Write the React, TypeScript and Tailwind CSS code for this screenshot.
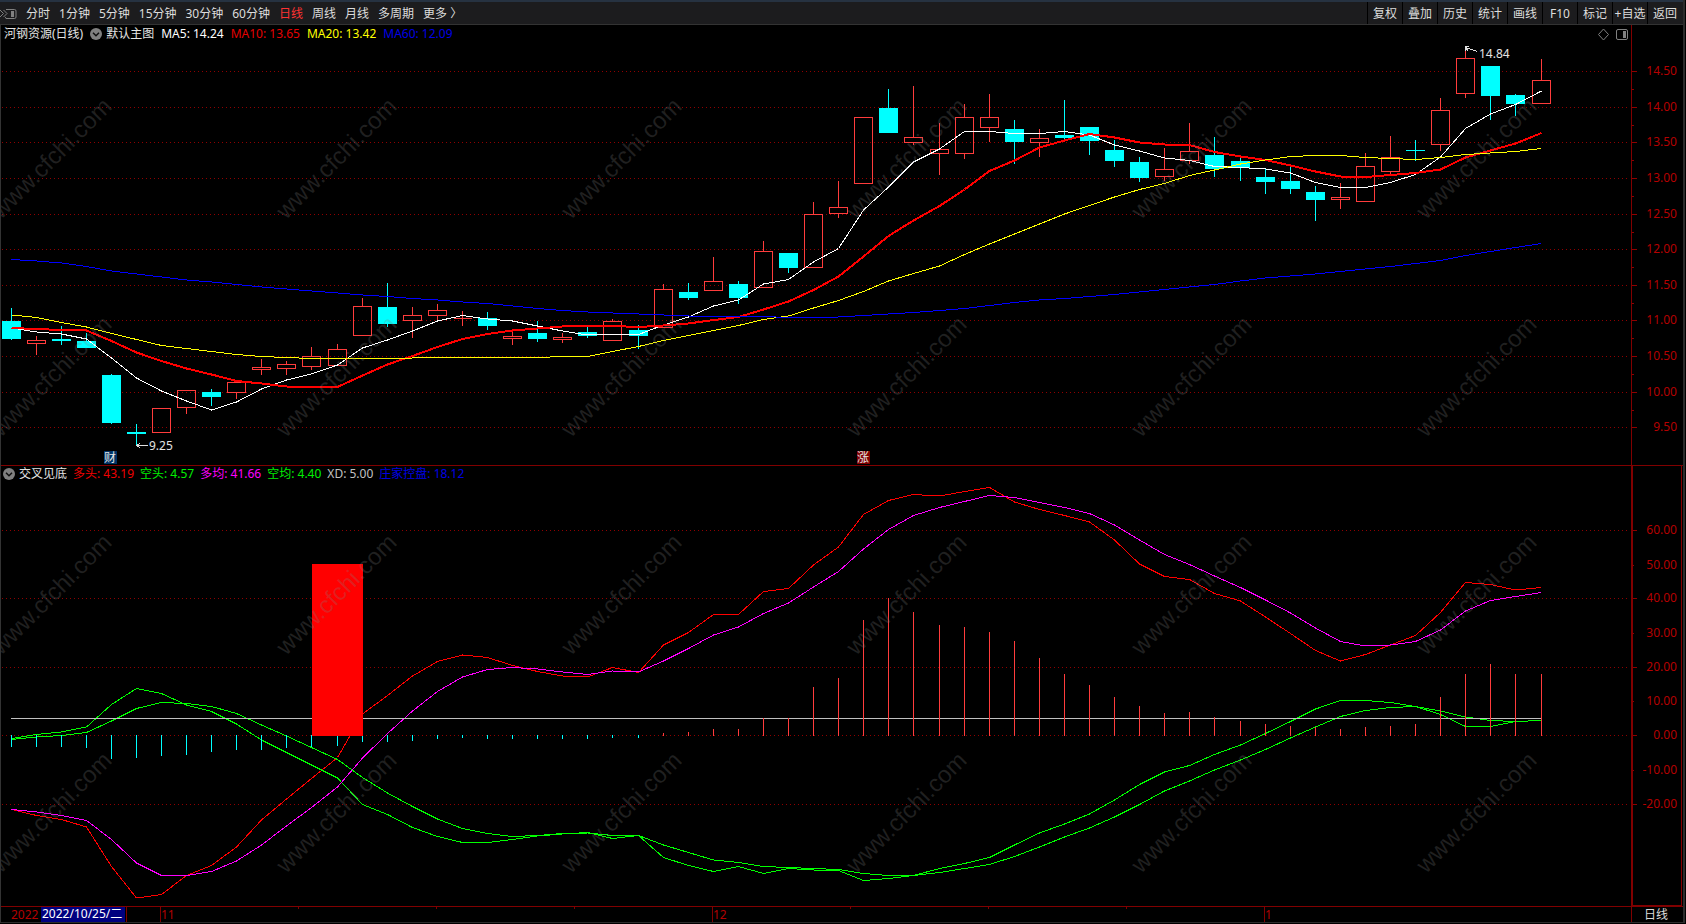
type Candle = [high: number, top: number, bottom: number, low: number, rising: 0 | 1];

const FIRST_X = 11;
const LAST_X = 1541;
const COUNT = 62;

const xAt = (i: number) => Math.floor(FIRST_X + (i * (LAST_X - FIRST_X)) / (COUNT - 1)) + 0.5;

const candles: Candle[] = [
  [308, 321, 339, 340, 0], [336, 340, 344, 355, 1], [326, 339, 341, 345, 0], [333, 341, 348, 348, 0],
  [374, 375, 423, 424, 0], [424, 432, 434, 445, 0], [408, 408, 433, 433, 1], [390, 390, 408, 414, 1],
  [389, 392, 397, 406, 0], [382, 382, 393, 399, 1], [359, 367, 370, 375, 1], [361, 364, 369, 375, 1],
  [347, 356, 367, 370, 1], [344, 349, 366, 366, 1], [298, 306, 336, 336, 1], [283, 307, 324, 327, 0],
  [307, 315, 321, 338, 1], [304, 310, 316, 320, 1], [311, 318, 319, 326, 1], [312, 318, 326, 330, 0],
  [331, 336, 339, 345, 1], [321, 333, 339, 342, 0], [333, 337, 340, 343, 1], [325, 332, 336, 338, 0],
  [319, 321, 341, 341, 1], [325, 330, 336, 349, 0], [284, 289, 328, 328, 1], [283, 292, 298, 300, 0],
  [257, 281, 291, 291, 1], [281, 284, 298, 304, 0], [241, 251, 288, 288, 1], [253, 253, 268, 273, 0],
  [202, 214, 268, 268, 1], [181, 207, 214, 218, 1], [117, 117, 184, 184, 1], [89, 108, 133, 133, 0],
  [86, 137, 143, 145, 1], [123, 149, 154, 175, 1], [104, 117, 154, 159, 1], [94, 117, 128, 142, 1],
  [120, 129, 142, 164, 0], [129, 138, 143, 157, 1], [100, 135, 138, 139, 0], [127, 127, 141, 155, 0],
  [140, 150, 161, 167, 0], [157, 162, 178, 182, 0], [148, 169, 177, 181, 1], [123, 151, 161, 164, 1],
  [137, 155, 169, 177, 0], [157, 161, 168, 181, 0], [169, 177, 182, 194, 0], [166, 181, 189, 194, 0],
  [186, 192, 200, 221, 0], [183, 197, 200, 209, 1], [153, 166, 202, 202, 1], [136, 157, 172, 174, 1],
  [140, 150, 151, 161, 0], [98, 110, 145, 151, 1], [50, 58, 94, 98, 1], [66, 66, 96, 120, 0],
  [94, 95, 104, 116, 0], [59, 80, 104, 104, 1],
];

const ma5 = [
  328, 332, 334, 339, 358, 378, 391, 401, 410, 402, 389, 380, 374, 365, 348, 340, 331, 321, 315.5, 319, 321, 326, 331,
  335, 334.5, 334.5, 325, 317, 306, 300, 284, 279.5, 262, 248.5, 210, 187, 162, 149, 131.5, 131.5, 133.5, 133.5, 131.5,
  135, 145, 151, 158, 160.5, 166.5, 167.5, 169, 173, 182.5, 187.5, 187.5, 182.5, 174.5, 157, 128.5, 114, 104.5, 91,
];
const ma10 = [
  328, 329, 330, 330.5, 341, 352.5, 361, 368.5, 374.5, 381, 383.5, 386.5, 387, 387, 375.5, 364.5, 356, 347, 339, 334,
  330.5, 328.5, 326.5, 326, 326, 327, 325.5, 323.5, 320, 317, 309.5, 301.5, 290, 276.5, 256.5, 236, 220.5, 206, 189.5,
  171, 160.5, 147.5, 140.5, 134, 137.5, 142.5, 144.5, 145, 152, 156.5, 160, 165.5, 171.5, 176.5, 177, 175, 173, 169.5,
  157.5, 150.5, 143.5, 133,
];
const ma20 = [
  315, 317.5, 322.5, 327, 333.5, 339.5, 345.5, 348.5, 351.5, 354.5, 356.5, 357.5, 358.5, 358.5, 358.5, 358.5, 358, 357.5,
  357.5, 357.5, 357.5, 357.5, 356.5, 356.5, 351.5, 346.5, 340.5, 335.5, 330.5, 325.5, 319.5, 316, 308, 300.5, 291.5, 281,
  273.5, 266, 254.5, 244, 234, 224, 214, 205.5, 197, 189.5, 183.5, 175.5, 170, 164, 160, 156.5, 155.5, 155.5, 157.5,
  158.5, 159.5, 157.5, 154.5, 153, 151.5, 148.5,
];
const ma60 = [
  259.5, 261, 263, 266.5, 271, 274, 277, 280, 282, 284.5, 287, 289, 291, 293, 295, 296.5, 298.5, 300, 302, 303.5, 306,
  308.5, 310.5, 312, 313, 314, 315, 316, 316.5, 316.5, 316.5, 317.5, 317.5, 317, 315.5, 314, 312.5, 310.5, 308.5, 305.5,
  302.5, 300, 298.5, 296.5, 294.5, 292, 289.5, 287, 284.5, 281, 278, 276, 274, 271.5, 269, 266.5, 263.5, 260.5, 255.5,
  251.5, 247.5, 243.5,
];

const bull = [
  809.5, 815.5, 819.5, 827, 866.5, 898, 894.5, 875.5, 865.5, 847, 820, 799, 778.5, 757.5, 714, 695.5, 676, 661.5, 655,
  657.5, 665.5, 671.5, 676, 677, 667.5, 672.5, 645, 632.5, 614.5, 614.5, 591.5, 588.5, 565, 547, 514.5, 500.5, 494.5,
  496, 491.5, 487.5, 502, 509.5, 515.5, 522, 540, 564, 576.5, 579.5, 593.5, 601, 617, 633.5, 650.5, 661, 654.5, 645,
  635.5, 612.5, 582.5, 584.5, 590, 587.5,
];
const bullAvg = [
  809.5, 812, 815.5, 820.5, 839.5, 863, 875.5, 875.5, 871.5, 861, 845, 826, 807.5, 787, 758, 733.5, 711, 691.5, 677,
  669.5, 667.5, 669, 672, 674.5, 671, 672, 661, 648.5, 635, 627, 613.5, 603, 587, 571.5, 549, 529.5, 515.5, 507.5, 501.5,
  495.5, 497.5, 502.5, 507.5, 513.5, 525, 540, 554.5, 564.5, 576, 587.5, 600, 613, 628, 641.5, 646, 645, 641.5, 630, 611,
  600.5, 596.5, 592.5,
];
const bear = [
  738.5, 734.5, 732, 727, 704.5, 688.5, 693.5, 705, 711.5, 724, 740, 752.5, 765, 778, 804.5, 814.5, 827.5, 836.5, 842.5,
  842.5, 839.5, 836, 834, 832.5, 838.5, 835.5, 857.5, 865.5, 871.5, 866.5, 873.5, 868.5, 870, 870.5, 880.5, 878.5, 875.5,
  868.5, 863.5, 857.5, 845, 833, 824, 814, 800, 784.5, 772, 765.5, 754.5, 745, 733.5, 721.5, 709, 700.5, 700.5, 702.5,
  706.5, 714.5, 726.5, 726.5, 721.5, 720.5,
];
const bearAvg = [
  739.5, 737, 735.5, 732.5, 721, 708.5, 702.5, 703.5, 706.5, 713.5, 725, 736, 747.5, 759.5, 777.5, 793, 806.5, 819,
  828.5, 833.5, 836.5, 835.5, 833.5, 833, 835.5, 835.5, 845, 852.5, 860, 862.5, 866.5, 867.5, 868.5, 869.5, 873.5, 875.5,
  875.5, 872.5, 868.5, 864.5, 856.5, 847, 837, 828, 817, 804.5, 791, 781, 770, 760, 749.5, 738, 727, 716.5, 710.5, 707.5,
  706.5, 711, 717, 720.5, 721.5, 720.5,
];
const control = [
  747, 747, 747, 748, 759, 758, 756, 755, 752, 750, 750, 748, 747, 746, 742, 742, 741, 739, 738, 739, 739, 739, 739, 739,
  738, 738, 733, 732, 729, 729, 718, 718, 687, 678, 620, 598, 612, 625, 627, 632, 641, 658, 674, 685, 697, 706, 713, 712,
  717, 721, 724, 726, 727, 729, 727, 726, 724, 697, 674, 664, 674, 674,
];

const priceLevels: [string, number][] = [
  ["14.50", 71], ["14.00", 107], ["13.50", 142], ["13.00", 178], ["12.50", 214], ["12.00", 249],
  ["11.50", 285], ["11.00", 320], ["10.50", 356], ["10.00", 392], ["9.50", 427],
];
const indicatorLevels: [string, number, boolean][] = [
  ["60.00", 530, true], ["50.00", 565, false], ["40.00", 598, true], ["30.00", 633, false], ["20.00", 667, true],
  ["10.00", 701, false], ["0.00", 735, true], ["-10.00", 770, false], ["-20.00", 804, true],
];
const watermarkXs = [51, 336, 621, 906, 1191, 1476];

const toPoints = (ys: number[]) => ys.map((y, i) => `${xAt(i)},${y}`).join(" ");

function Series({ ys, color, width = 1 }: { ys: number[]; color: string; width?: number }) {
  return <polyline points={toPoints(ys)} fill="none" stroke={color} strokeWidth={width} />;
}

function GridLine({ y }: { y: number }) {
  return <line x1="2" x2="1628" y1={y + 0.5} y2={y + 0.5} stroke="#900000" strokeDasharray="1 3" />;
}

function Watermarks({ rows }: { rows: number[] }) {
  return (
    <g aria-hidden="true" className="fill-[#808080]/25 font-['Liberation_Sans',sans-serif] text-[24px]">
      {rows.map((y) =>
        watermarkXs.map((x) => (
          <text key={`${x}-${y}`} x={x} y={y} textAnchor="middle" dominantBaseline="central" transform={`rotate(-45 ${x} ${y})`}>
            www.cfchi.com
          </text>
        )),
      )}
    </g>
  );
}

function ChevronBadge() {
  return (
    <svg viewBox="0 0 12 12" className="size-3 shrink-0" aria-hidden="true">
      <circle cx="6" cy="6" r="6" fill="#808080" />
      <path d="M3 4.8 L6 7.8 L9 4.8" fill="none" stroke="#101010" strokeWidth="1.5" />
    </svg>
  );
}

function PriceChart() {
  return (
    <svg viewBox="1 25 1682 440" className="block h-auto w-full" role="img" aria-label="日线K线图">
      <g shapeRendering="crispEdges">
        {priceLevels.map(([label, y], i) => (
          <g key={label} stroke="#900000">
            <GridLine y={y} />
            <line x1="1632" x2="1637" y1={y + 0.5} y2={y + 0.5} />
            {i < priceLevels.length - 1 && <line x1="1632" x2="1634" y1={y + 18.5} y2={y + 18.5} />}
          </g>
        ))}
        <line x1="1631.5" x2="1631.5" y1="25" y2="465" stroke="#800000" />
        {candles.map(([high, top, bottom, low, rising], i) => {
          const x = xAt(i);
          if (!rising) {
            return (
              <g key={i} fill="#00ffff">
                <rect x={x - 0.5} y={high} width="1" height={low - high} />
                <rect x={x - 9.5} y={top} width="19" height={bottom - top} />
              </g>
            );
          }
          return (
            <g key={i} fill="none" stroke="#ff3c3c">
              <line x1={x} x2={x} y1={high} y2={top} />
              <line x1={x} x2={x} y1={bottom} y2={low} />
              {bottom - top <= 1 ? (
                <line x1={x - 9} x2={x + 9} y1={top + 0.5} y2={top + 0.5} />
              ) : (
                <rect x={x - 9} y={top + 0.5} width="18" height={bottom - top - 1} />
              )}
            </g>
          );
        })}
        <Series ys={ma5} color="#ffffff" />
        <Series ys={ma10} color="#ff0000" width={2} />
        <Series ys={ma20} color="#ffff00" />
        <Series ys={ma60} color="#0000ff" />
        <g fill="none" stroke="#e0e0e0">
          <path d="M1477 51.5 L1466 47.5 M1469 46.5 H1465.5 V51 M1466 48 L1468 51" />
          <path d="M148 445.5 H137 M140 443 L137 445.5 L140 448" />
        </g>
        <rect x="104" y="451" width="13" height="13" fill="#003366" />
        <rect x="857" y="451" width="13" height="13" fill="#800000" />
      </g>
      <g className="fill-[#e4e4e4] text-xs">
        <text x="1479" y="58">14.84</text>
        <text x="149" y="450">9.25</text>
        <text x="104" y="462">财</text>
        <text x="857" y="462">涨</text>
      </g>
      <g className="fill-[#b40000] text-xs">
        {priceLevels.map(([label, y]) => (
          <text key={label} x="1677" y={y + 4} textAnchor="end">
            {label}
          </text>
        ))}
      </g>
      <g fill="none" stroke="#808080">
        <path d="M1603.5 29 L1608.5 34.5 L1603.5 40 L1598.5 34.5 Z" />
        <rect x="1616.5" y="29.5" width="11" height="10" rx="1.5" />
        <rect x="1623" y="31" width="3" height="7" fill="#808080" stroke="none" />
      </g>
      <Watermarks rows={[158, 376]} />
    </svg>
  );
}

function IndicatorChart() {
  return (
    <svg viewBox="1 465 1682 458" className="block h-auto w-full" role="img" aria-label="交叉见底指标图">
      <g shapeRendering="crispEdges">
        {indicatorLevels.map(([label, y, major]) => (
          <g key={label} stroke="#900000">
            {major && <GridLine y={y} />}
            <line x1="1632" x2={major ? 1637 : 1634} y1={y + 0.5} y2={y + 0.5} />
          </g>
        ))}
        <Series ys={bull} color="#ff0000" />
        <Series ys={bear} color="#00ff00" />
        <Series ys={bullAvg} color="#ff00ff" />
        <Series ys={bearAvg} color="#00ff00" />
        <line x1="11" x2="1542" y1="718.5" y2="718.5" stroke="#c0c0c0" />
        {control.map((y, i) => (
          <line key={i} x1={xAt(i)} x2={xAt(i)} y1={y > 735 ? 735 : 736} y2={y} stroke={y > 735 ? "#00ffff" : "#ff3c3c"} />
        ))}
        <rect x="312" y="564" width="51" height="172" fill="#ff0000" />
        <g fill="#800000">
          <rect x="1" y="465" width="1682" height="1" />
          <rect x="1" y="906" width="1682" height="1" />
          <rect x="1631" y="465" width="2" height="442" />
          <rect x="1632" y="905" width="50" height="2" />
          <rect x="1681" y="465" width="1" height="441" />
          <rect x="1631" y="907" width="1" height="15" />
          {[298, 436, 574, 850, 988, 1126].map((x) => (
            <rect key={x} x={x} y="907" width="1" height="2" />
          ))}
          {[126, 160, 712, 1264].map((x) => (
            <rect key={x} x={x} y="907" width="1" height="15" />
          ))}
        </g>
        <rect x="1" y="922" width="1682" height="1" fill="#2c2c2c" />
      </g>
      <g className="fill-[#b40000] text-xs">
        {indicatorLevels.map(([label, y]) => (
          <text key={label} x="1677" y={y + 4} textAnchor="end">
            {label}
          </text>
        ))}
        <text x="11" y="919">2022</text>
        <text x="161" y="919">11</text>
        <text x="713" y="919">12</text>
        <text x="1265" y="919">1</text>
      </g>
      <rect x="41" y="907" width="84" height="15" fill="#000080" />
      <text x="42" y="918" className="fill-white text-xs">
        2022/10/25/二
      </text>
      <text x="1644" y="919" className="fill-[#dcdcdc] text-xs">
        日线
      </text>
      <Watermarks rows={[594, 812]} />
    </svg>
  );
}

const periods = ["分时", "1分钟", "5分钟", "15分钟", "30分钟", "60分钟", "日线", "周线", "月线", "多周期", "更多 〉"];
const tools = ["复权", "叠加", "历史", "统计", "画线", "F10", "标记", "+自选", "返回"];

function Toolbar() {
  return (
    <header className="flex h-[25px] items-stretch justify-between border-t-2 border-b border-t-[#263241] border-b-[#333333] bg-[#1c1c1e] pr-px text-[#dcdcdc]">
      <nav className="flex items-center gap-[9px] pt-[2px]">
        <button type="button" aria-label="展开侧栏" className="flex">
          <svg viewBox="0 0 17 12" className="h-3 w-[17px]" fill="none" stroke="#808080">
            <path d="M0 2 L3.5 5.5 L0 9 M3.5 2 L7 5.5 L3.5 9" />
            <path d="M6 1.5 H14.5 Q16 1.5 16 3 V9 Q16 10.5 14.5 10.5 H6 Q5.5 10.5 5.5 9" />
            <rect x="11" y="3" width="3" height="6" fill="#808080" stroke="none" />
          </svg>
        </button>
        {periods.map((p) => (
          <button key={p} type="button" className={p === "日线" ? "whitespace-nowrap text-[#ff3232]" : "whitespace-nowrap"}>
            {p}
          </button>
        ))}
      </nav>
      <div className="flex">
        {tools.map((t) => (
          <button key={t} type="button" className="flex w-[35px] items-center justify-center border-l border-black pt-[2px] whitespace-nowrap">
            {t}
          </button>
        ))}
      </div>
    </header>
  );
}

export default function App() {
  return (
    <div className="flex min-h-screen flex-col bg-black font-['Noto_Sans','Noto_Sans_CJK_SC',sans-serif] text-xs leading-4">
      <div className="mr-px border-r-2 border-[#2c2c2c]">
        <Toolbar />
        <main className="border-l border-[#333333]">
          <section className="relative">
            <PriceChart />
            <div className="absolute top-0 left-0 flex h-[18px] items-center gap-[7px] pl-[3px] whitespace-nowrap text-[#e4e4e4]">
              <span>河钢资源(日线)</span>
              <button type="button" aria-label="主图设置" className="flex items-center gap-1">
                <ChevronBadge />
                默认主图
              </button>
              <span className="text-white">MA5: 14.24</span>
              <span className="text-[#e60000]">MA10: 13.65</span>
              <span className="text-[#ffff00]">MA20: 13.42</span>
              <span className="text-[#0000e6]">MA60: 12.09</span>
            </div>
          </section>
          <section className="relative">
            <IndicatorChart />
            <div className="absolute top-0 left-0 flex h-[18px] items-center gap-[6px] pl-[2px] whitespace-nowrap text-[#e4e4e4]">
              <button type="button" aria-label="指标设置" className="flex items-center gap-1">
                <ChevronBadge />
                交叉见底
              </button>
              <span className="text-[#f00000]">多头: 43.19</span>
              <span className="text-[#00f000]">空头: 4.57</span>
              <span className="text-[#ff00ff]">多均: 41.66</span>
              <span className="text-[#00f000]">空均: 4.40</span>
              <span className="text-[#c0c0c0]">XD: 5.00</span>
              <span className="text-[#0000e6]">庄家控盘: 18.12</span>
            </div>
          </section>
        </main>
      </div>
    </div>
  );
}
